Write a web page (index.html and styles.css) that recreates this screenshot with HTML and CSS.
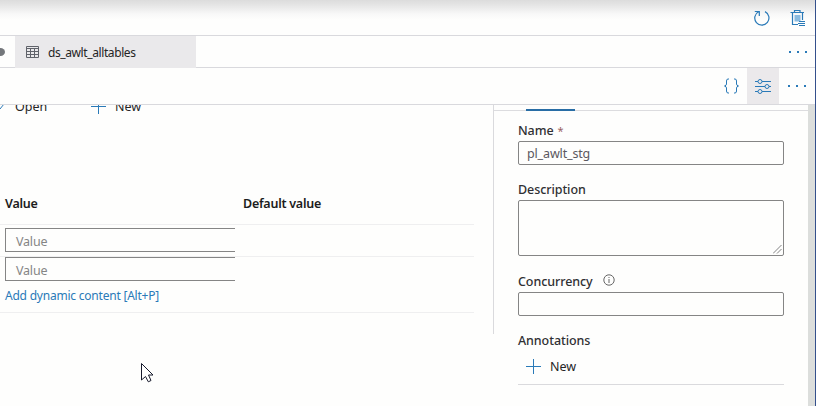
FILE: index.html
```
<!DOCTYPE html>
<html lang="en">
<head>
<meta charset="utf-8">
<title>Pipeline properties</title>
<link rel="stylesheet" href="styles.css">
</head>
<body>
<div class="app">
  <header class="topbar">
    <svg class="icon-refresh" width="18" height="18" viewBox="0 0 18 18"><path d="M5.5 2.7A7.1 7.1 0 1 0 12 2.6M1.8 2.500H6.3V6.900"/></svg>
    <svg class="icon-trash" width="16" height="18" viewBox="0 0 16 18"><path d="M.5 3.500H14M4.500 3V1.500H10V3M2.500 4V15.500H8M12.500 4V11"/><path class="solid" d="M4.500 6H10.500V12.500H4.500Z"/><path d="M9 12.500H15M8 14.500H15M9 16.500H15"/></svg>
  </header>
  <nav class="tabs">
    <div class="tab-prev"><span class="dirty"></span></div>
    <div class="tab">
      <svg width="13" height="12" viewBox="0 0 13 12"><path d="M.5 .5H12.5V11.5H.5ZM.5 2.5H12.5M.5 5.5H12.5M.5 8.5H12.5M4.5 2.5V11.5M8.5 2.5V11.5"/></svg>
      <span class="tab-name">ds_awlt_alltables</span>
    </div>
    <div class="more"><i></i><i></i><i></i></div>
  </nav>
  <div class="toolbar">
    <svg class="braces" width="15" height="16" viewBox="0 0 15 16"><path d="M5 1H4Q2.5 1 2.5 3V6Q2.5 7.5 .5 8Q2.5 8.500 2.500 10V13Q2.500 15 4 15H5M10 1H11Q12.500 1 12.500 3V6Q12.500 7.500 14.500 8Q12.500 8.500 12.500 10V13Q12.500 15 11 15H10"/></svg>
    <div class="toggle"><svg width="17" height="16" viewBox="0 0 17 16"><path d="M0 3.500H3M7 3.500H16M0 8.500H10M14 8.500H16M0 13.500H3M7 13.500H16"/><circle cx="5" cy="3.500" r="2"/><circle cx="12" cy="8.500" r="2"/><circle cx="5" cy="13.500" r="2"/></svg></div>
    <div class="more"><i></i><i></i><i></i></div>
  </div>
  <main class="content">
    <section class="params">
      <div class="actions">
        <svg class="pencil" width="5" height="12" viewBox="0 0 5 12"><path d="M0 8L4 3"/></svg>
        <span class="open">Open</span>
        <svg class="plus" width="15" height="15" viewBox="0 0 15 15"><path d="M0 7.500H15M7.500 0V15"/></svg>
        <span class="new">New</span>
      </div>
      <div class="grid">
        <div class="row head"><b class="h-value">Value</b><b class="h-default">Default value</b></div>
        <div class="row first"><div class="field">Value</div></div>
        <div class="row second"><div class="field">Value</div><a class="dynamic">Add dynamic content [Alt+P]</a></div>
      </div>
    </section>
    <div class="divider"></div>
    <aside class="props">
      <div class="prop-tabs"><span class="active"></span></div>
      <div class="form">
        <div class="label"><span class="l-name">Name</span><span class="req">*</span></div>
        <div class="box"><span class="name-value">pl_awlt_stg</span></div>
        <div class="label"><span class="l-desc">Description</span></div>
        <div class="box area"><svg width="9" height="9" viewBox="0 0 9 9"><path d="M0 8.500L8.500 0M4 8.500L8.500 4"/></svg></div>
        <div class="label"><span class="l-conc">Concurrency</span><svg class="info" width="12" height="12" viewBox="0 0 12 12"><circle cx="6" cy="6" r="5.200"/><path d="M6 5V9M6 3V4"/></svg></div>
        <div class="box"></div>
        <div class="label"><span class="l-ann">Annotations</span></div>
        <div class="add"><svg class="plus" width="15" height="15" viewBox="0 0 15 15"><path d="M0 7.500H15M7.500 0V15"/></svg><span class="new">New</span></div>
      </div>
    </aside>
    <div class="scroll"></div>
  </main>
</div>
<svg class="cursor" width="13" height="20" viewBox="0 0 13 20"><path d="M.5 .5V17L4.500 13.500L7.300 18.800L10 17.500L7.500 12H12Z"/></svg>
</body>
</html>
```
FILE: styles.css
```
* { box-sizing: border-box; }
body {
  margin: 0;
  width: 816px;
  height: 406px;
  overflow: hidden;
  background: #fefefd;
  font: 12.5px/20px "Noto Sans", "Open Sans", sans-serif;
  color: #252525;
  white-space: nowrap;
}
svg { display: block; flex: none; fill: none; stroke: #2a7ab8; stroke-width: 1; }
span, a, b { flex: none; }
.app { height: 406px; display: flex; flex-direction: column; border-right: 1px solid #34508c; }
.topbar {
  height: 36px;
  display: flex;
  align-items: flex-start;
  justify-content: flex-end;
  gap: 19px;
  padding: 9px 9px 0 0;
  border-bottom: 1px solid #d9d9dd;
  background: linear-gradient(#dcdcdc, #e5e5e5 5px, #f8f8f8 14px, #fefefd 20px);
}
.icon-refresh { stroke-width: 1.2; }
.icon-trash { stroke-width: 1.2; }
.solid { fill: #8abbe0; stroke: none; }
.tabs { height: 32px; display: flex; border-bottom: 1px solid #d9d9dd; }
.tab-prev { width: 15px; display: flex; align-items: center; }
.dirty { width: 9px; height: 8px; margin-left: -4px; border-radius: 50%; background: #74777b; }
.tab { width: 181px; height: 32px; display: flex; align-items: center; padding-left: 11px; gap: 9px; background: #eae9eb; }
.tab svg { stroke: #60636a; }
.tab-name { font-size: 12px; letter-spacing: -.4px; padding-top: 2px; }
.more { display: flex; align-items: center; gap: 5px; }
.tabs .more { margin-left: auto; margin-right: 7px; }
.more i { width: 2px; height: 2px; margin-right: 1px; background: #2a7ab8; }
.toolbar { height: 37px; display: flex; align-items: center; justify-content: flex-end; border-bottom: 1px solid #d9d9dd; }
.toggle { width: 32px; height: 36px; margin: 0 9px 0 8px; display: flex; align-items: center; justify-content: center; background: #ebe9eb; }
.toolbar .more { margin-right: 8px; }
.content { flex: 1; display: flex; min-height: 0; overflow: hidden; }
.params { width: 493px; }
.actions { height: 12px; margin-top: -4px; display: flex; align-items: center; }
.actions .plus { margin-left: 44px; margin-top: -2px; }
.open { margin-left: 10px; width: 32px; }
.actions .new { margin-left: 9px; }
.grid { width: 474px; margin-top: 75px; }
.row { border-bottom: 1px solid #efeff0; padding-left: 5px; }
.head { height: 37px; display: flex; padding-top: 6px; }
b { font-weight: 600; color: #1c1c20; letter-spacing: -.25px; }
.h-value { width: 238px; }
.first { height: 32px; padding-top: 3px; }
.second { height: 56px; }
.field { width: 230px; height: 24px; border: 1px solid #858585; border-right: 0; padding: 3px 0 0 10px; color: #858585; background: #fefefd; line-height: 19px; letter-spacing: -.2px; }
.dynamic { display: block; width: max-content; margin-top: 4px; padding-top: 1px; color: #2a7ab8; font-size: 12px; letter-spacing: -.22px; }
.divider { width: 1px; height: 229px; background: #dadadd; }
.props { width: 314px; }
.prop-tabs { height: 6px; border-bottom: 1px solid #dcdcdf; padding: 4px 0 0 32px; }
.active { display: block; width: 49px; height: 2px; background: #286da5; }
.form { width: 266px; margin-left: 24px; padding-top: 10px; }
.label { height: 20px; display: flex; font-weight: 500; color: #303033; letter-spacing: -.08px; }
.req { margin-left: 4px; color: #9b6262; font-size: 11px; font-weight: 400; }
.box { height: 24px; border: 1px solid #858585; border-radius: 2px; padding: 2px 8px; color: #5b5860; margin-bottom: 15px; letter-spacing: -.15px; }
.area { height: 56px; display: flex; align-items: flex-end; justify-content: flex-end; padding: 0 1px 1px; }
.area svg { stroke: #666; stroke-width: .8; }
.area + .label { margin-top: 16px; }
.info { margin: 2px 0 0 10px; stroke: #666; }
.add { height: 34px; display: flex; align-items: center; padding: 0 0 2px 8px; border-bottom: 1px solid #dadadd; }
.add .new { margin-left: 9px; }
.scroll { width: 7px; background: #dcdedc; }
.cursor { position: absolute; left: 141px; top: 363px; fill: #fff; stroke: #171a2c; }
```
